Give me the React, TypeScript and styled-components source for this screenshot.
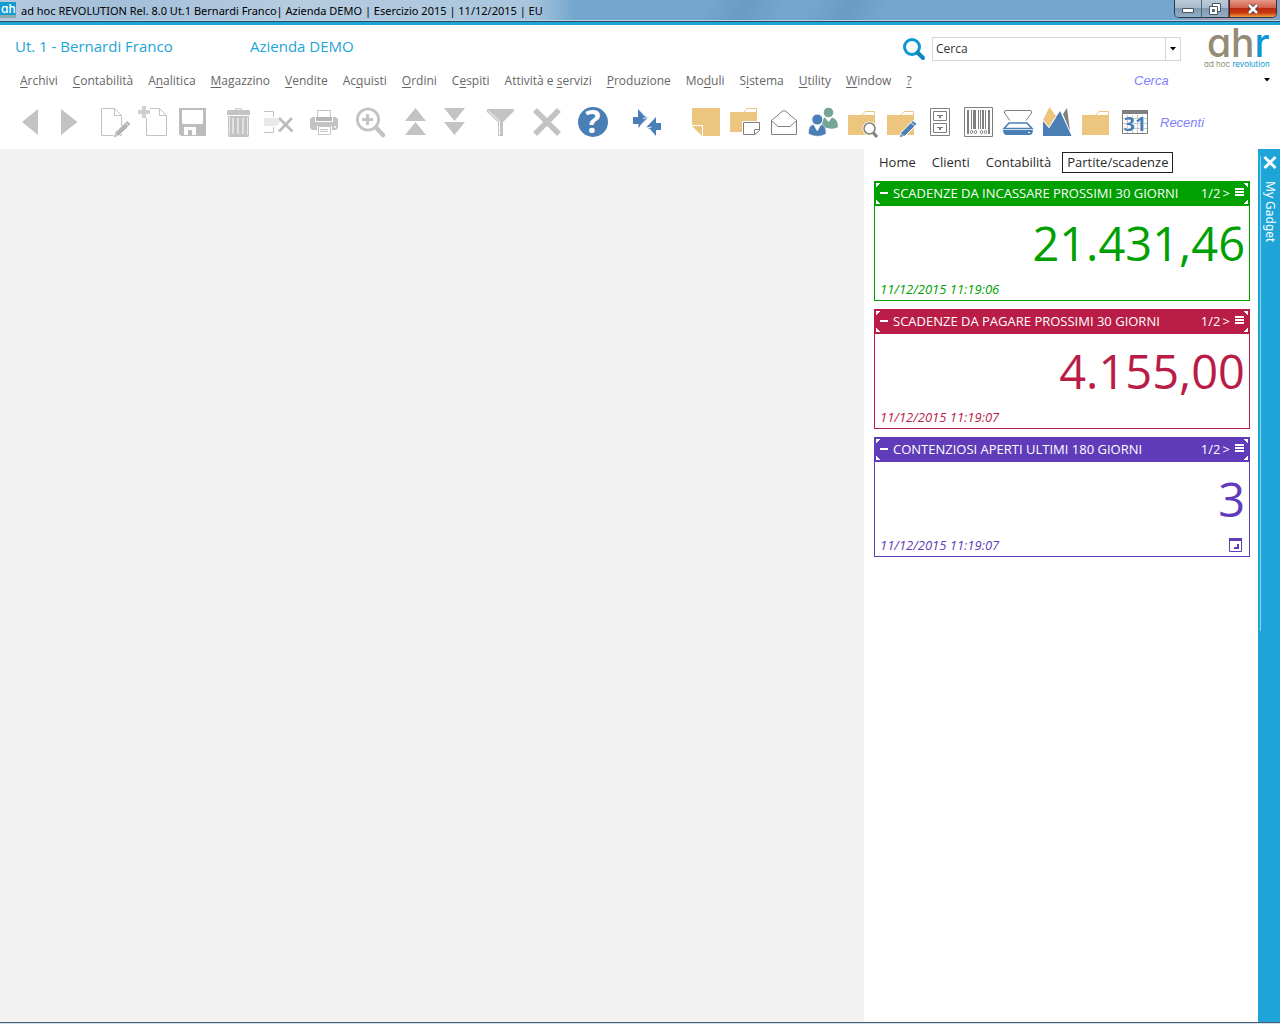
import React from 'react';
import styled, { createGlobalStyle } from 'styled-components';

const CYAN = '#1ea5d8';
const GREY = '#c3c3c3';
const DARK = '#7f7f7f';
const BLUE = '#4a7fb5';
const GOLD = '#ecc67e';

const GlobalStyle = createGlobalStyle`
  *, *::before, *::after { box-sizing: border-box; }
  body { margin: 0; background: #fff; font-family: 'Open Sans', 'Noto Sans', sans-serif; }
  button, input, select { font: inherit; color: inherit; margin: 0; }
  button { border: 0; padding: 0; background: none; cursor: pointer; }
  svg { display: block; flex: none; overflow: visible; }
`;

const Page = styled.div`
  min-height: 100vh;
  display: flex;
  flex-direction: column;
`;

/* ---------- Window title bar ---------- */

const TitleBar = styled.header`
  display: flex;
  align-items: flex-start;
  height: 25px;
  padding-right: 3px;
  border-bottom: 3px solid ${CYAN};
  box-shadow: inset 0 -1px 0 #34495e, inset 0 -2px 0 #b9d3e8;
  background:
    radial-gradient(ellipse 60px 30px at 1232px 8px, rgba(240, 130, 120, 0.7), transparent),
    linear-gradient(90deg, #b3c9de 0, #a3bfd9 120px, #b6cce0 300px, #a9c5dd 530px, rgba(169, 197, 221, 0) 575px),
    linear-gradient(115deg, #74a7cd 55%, #689cc4 58%, #74a7cd 61%, #74a7cd 63%, #689cc4 66%, #74a7cd 69%);
`;

const AppBadge = styled.span`
  width: 16px;
  height: 16px;
  margin: 2px 5px 0 0;
  background: #149bd0;
`;

const WindowTitle = styled.h1`
  flex: 1;
  margin: 0;
  font-family: 'Noto Sans', 'Open Sans', sans-serif;
  font-size: 11px;
  line-height: 22px;
  font-weight: 400;
  color: #000;
  white-space: nowrap;
`;

const WindowButtons = styled.div`
  display: flex;
  height: 18px;
  border: 1px solid #26384c;
  border-top: 0;
  border-radius: 0 0 5px 5px;
  overflow: hidden;
`;

const WindowButton = styled.button<{ $close?: boolean }>`
  width: ${p => (p.$close ? 47 : 27)}px;
  display: flex;
  align-items: center;
  justify-content: center;
  border-left: ${p => (p.$close ? '1px solid #5b1a12' : '0')};
  border-right: ${p => (p.$close ? '0' : '1px solid #4c6378')};
  background: ${p =>
    p.$close
      ? 'linear-gradient(#e59a8a 0, #d4604a 45%, #bb2a10 50%, #c9380f 75%, #f0a040)'
      : 'linear-gradient(#bccbd8 0, #a9bccd 45%, #7f9ab2 50%, #93afc6)'};
`;

/* ---------- Application header ---------- */

const AppHeader = styled.div`
  background: #fff;
`;

const IdentityRow = styled.div`
  display: flex;
  align-items: center;
  height: 43px;
  padding: 0 10px 0 15px;
  color: ${CYAN};
  font-size: 15px;
`;

const UserName = styled.span`
  width: 235px;
  padding-bottom: 2px;
`;

const Company = styled.span`
  flex: 1;
  padding-bottom: 2px;
`;

const SearchLabel = styled.label`
  margin: 4px 6px 0 0;
`;

const SearchBox = styled.div`
  display: flex;
  width: 249px;
  height: 24px;
  margin: 4px 23px 0 0;
  border: 1px solid #d6d6d6;
`;

const SearchInput = styled.input`
  flex: 1;
  min-width: 0;
  border: 0;
  outline: 0;
  padding: 0 3px;
  color: #333;
  font-size: 12px;
`;

const DropButton = styled.button`
  width: 15px;
  border-left: 1px solid #d6d6d6;
  display: flex;
  align-items: center;
  justify-content: center;
`;

const MenuRow = styled.div`
  display: flex;
  align-items: center;
  height: 24px;
  padding: 0 10px 0 20px;
`;

const Menu = styled.nav`
  flex: 1;
  display: flex;
  gap: 15px;
  padding-top: 2px;
`;

const MenuItem = styled.button`
  font-size: 12px;
  line-height: 20px;
  color: #666;
  white-space: nowrap;

  u { text-underline-offset: 2px; }
`;

const QuickFind = styled.div`
  display: flex;
  align-items: center;
  width: 136px;
`;

const QuickSelect = styled.select`
  flex: 1;
  appearance: none;
  border: 0;
  padding: 0;
  background: none;
  font: italic 13px 'Liberation Sans', Arial, sans-serif;
  color: #8080ff;
`;

const ToolRow = styled.div`
  display: flex;
  align-items: center;
  height: 57px;
  padding: 3px 0 0 14px;
`;

const ToolGroup = styled.div<{ $after?: number }>`
  display: flex;
  gap: 7px;
  margin-right: ${p => p.$after ?? 14}px;
`;

const ToolButton = styled.button`
  width: 32px;
  height: 32px;
`;

const RecentButton = styled.button`
  font: italic 13px 'Liberation Sans', Arial, sans-serif;
  color: #8080ff;
`;

/* ---------- Work area ---------- */

const Body = styled.div`
  flex: 1;
  display: flex;
`;

const Workspace = styled.main`
  flex: 1;
  background: #f2f2f2;
`;

const GadgetPanel = styled.aside`
  width: 394px;
  padding: 3px 8px 0 10px;
`;

const Tabs = styled.nav`
  display: flex;
  gap: 6px;
  height: 21px;
  margin-bottom: 8px;
`;

const Tab = styled.button<{ $active?: boolean }>`
  padding: 0 4px;
  border: 1px solid ${p => (p.$active ? '#222' : 'transparent')};
  font-size: 13px;
  line-height: 19px;
  color: #2b2b2b;
`;

const Card = styled.section<{ $color: string }>`
  display: flex;
  flex-direction: column;
  height: 120px;
  margin-bottom: 8px;
  border: 1px solid ${p => p.$color};
  color: ${p => p.$color};
`;

const corner = (angle: number, place: string) =>
  `linear-gradient(${angle}deg, #fff 3px, transparent 3px) ${place} / 4px 4px no-repeat`;

const CardHeader = styled.div<{ $color: string }>`
  display: flex;
  align-items: center;
  height: 23px;
  padding: 0 4px 2px;
  color: #fff;
  font-size: 13px;
  background:
    ${corner(135, 'left 1px top 1px')},
    ${corner(225, 'right 1px top 1px')},
    ${corner(45, 'left 1px bottom 1px')},
    ${corner(315, 'right 1px bottom 1px')},
    ${p => p.$color};
`;

const CardTitle = styled.h2`
  flex: 1;
  margin: 0 0 0 4px;
  font-size: 13px;
  line-height: 20px;
  font-weight: 400;
  white-space: nowrap;
`;

const Pager = styled.button`
  margin-right: 5px;
  line-height: 20px;
`;

const Amount = styled.p<{ $color: string }>`
  flex: 1;
  margin: 0;
  padding: 2px 4px 0 0;
  border-top: 1px solid ${p => p.$color};
  font-size: 47px;
  line-height: 70px;
  text-align: right;
`;

const CardFooter = styled.div`
  display: flex;
  align-items: center;
  justify-content: space-between;
  height: 22px;
  padding: 0 6px 0 5px;
  font-size: 13px;
  font-style: italic;
`;

const Rail = styled.aside`
  width: 22px;
  display: flex;
  flex-direction: column;
  align-items: center;
  padding: 7px 0 0 2px;
  color: #fff;
  background:
    linear-gradient(#8fd2ec, #8fd2ec) 2px 7px / 1px 475px no-repeat,
    ${CYAN};
`;

const RailTitle = styled.h2`
  margin: 12px 0 0;
  writing-mode: vertical-rl;
  font-family: 'Noto Sans', 'Open Sans', sans-serif;
  font-size: 12px;
  line-height: 16px;
  font-weight: 400;
`;

const TaskbarEdge = styled.footer`
  height: 2px;
  border-top: 1px solid #4a5b6b;
  background: #cfe0ef;
`;

/* ---------- Icons ---------- */

const Svg = ({ children }: { children: React.ReactNode }) => (
  <svg width="32" height="32" viewBox="0 0 32 32" fill="none" aria-hidden="true">
    {children}
  </svg>
);

const Folder = ({ y = 0, x = 0 }) => (
  <g transform={`translate(${x} ${y})`}>
    <path d="M2 9h12l4 -0.5H29V29H2z" fill={GOLD} />
    <path d="M15.500 9.500L19 5.500H28.500V9.500z" fill="#fff" stroke={GOLD} />
  </g>
);

const Pencil = ({ color, light }: { color: string; light?: boolean }) => (
  <g>
    <path d="M14 32L16 26.500L28 14.500L32 18L20 30z" fill={color} stroke="#fff" />
    <path d="M26 16.500L30 20.500" stroke="#fff" strokeWidth={light ? 0.8 : 1} />
    <path d="M16 27.500L18.500 30" stroke="#fff" strokeWidth="0.8" />
  </g>
);

const icons: Record<string, React.ReactNode> = {
  back: <path d="M8 16L24 3V29z" fill={GREY} />,
  forward: <path d="M24.500 16L8 3V29z" fill={GREY} />,
  edit: (
    <>
      <path d="M15.500 2.500H2.500V29.500H22.500V9.500zV9.500H22.500" stroke={GREY} />
      <Pencil color="#b4b4b4" light />
    </>
  ),
  create: (
    <>
      <path d="M12 2.500H21.500L28.500 9.500V29.500H8.500V12M21.500 2.500V9.500H28.500" stroke={GREY} />
      <path d="M4 0H8V4H12V8H8V12H4V8H0V4H4z" fill="#d0d0cd" />
    </>
  ),
  save: (
    <>
      <path d="M2 2H29V30H4L2 28z" fill="#bdbdbd" />
      <path d="M5 4H26V17L25 18H6L5 17z" fill="#fff" />
      <path d="M7 21H19V29H7z" fill="#fff" />
      <path d="M11 24H15V29H11z" fill="#bdbdbd" />
    </>
  ),
  trash: (
    <>
      <path d="M12.500 4.500V2.800H18.500V4.500" stroke={GREY} />
      <path d="M5 4H26L27 5V9H4V5z" fill={GREY} />
      <path d="M5 10H26V30L25 31H6L5 30z" fill={GREY} />
      <path d="M6.500 11V29M24.500 11V29" stroke="#fff" strokeWidth="0.6" />
      <path d="M10 12V28M15 12V28M20 12V28" stroke="#e2e2e2" strokeWidth="2" />
    </>
  ),
  removeRow: (
    <>
      <path d="M2 5.500H11.500V11M2 26.500H11.500V21" stroke={GREY} />
      <path d="M2 12H15L18 16L15 20H2z" fill="#e6eae7" />
      <path d="M17 12L30.500 25.500M30 12L17 25.500" stroke="#bdbdbd" strokeWidth="2.800" />
    </>
  ),
  print: (
    <>
      <path d="M9.500 11V4.500H22.500V11" stroke={GREY} />
      <path d="M8 11H24V15H8z" fill="#b5b5b5" />
      <path d="M4 11H7V16H25V11H28L30 13V22L28 24H4L2 22V13z" fill={GREY} />
      <path d="M9 20H24V24H9z" fill="#fff" />
      <path d="M10.500 20.500H22.500V28.500H10.500z" fill="#fff" stroke={GREY} />
      <path d="M12 23.500H20M12 25.500H20" stroke={GREY} />
      <circle cx="27" cy="21" r="1" fill="#fff" />
    </>
  ),
  zoom: (
    <>
      <circle cx="14" cy="13.500" r="10.600" stroke={GREY} strokeWidth="2.800" />
      <path d="M8 13.500H19M13.500 8V19" stroke={GREY} strokeWidth="3" />
      <path d="M22 21.500L29 29" stroke={GREY} strokeWidth="4.500" strokeLinecap="round" />
    </>
  ),
  first: <path d="M15.500 2L26 15H5zM15.500 16L26 29H5z" fill={GREY} />,
  last: <path d="M5 2H26L15.500 15zM5 16H26L15.500 29z" fill={GREY} />,
  filter: (
    <>
      <path d="M2 3H29V5L18 16V30H13V16L2 6z" fill={GREY} />
      <path d="M3.500 5L14.500 15V29" stroke="#fff" strokeWidth="1" />
    </>
  ),
  cancel: <path d="M4 4L28 28M28 4L4 28" stroke={GREY} strokeWidth="5.500" />,
  help: (
    <>
      <circle cx="16" cy="16" r="15" fill={BLUE} />
      <text x="16" y="27" textAnchor="middle" fontFamily="Open Sans, sans-serif" fontWeight="700" fontSize="32" fill="#fff">
        ?
      </text>
    </>
  ),
  swap: (
    <>
      <path d="M2 11H7V3L13.500 10L17.500 11.500L7.500 22V18H2z" fill={BLUE} />
      <path d="M30 17H25V11L15 21.500L19 23L25 30V24H30z" fill={BLUE} />
      <path d="M12 12.500L17.500 11L9 20M20 13.500L14.500 22L20.500 21" stroke="#fff" strokeWidth="0.900" />
    </>
  ),
  note: (
    <>
      <path d="M2 2H30V30H13V19H2z" fill={GOLD} />
      <path d="M2 20H12V30z" fill={GOLD} />
    </>
  ),
  folderNote: (
    <>
      <Folder x={-1} y={-3} />
      <path d="M13 15H31V30H13z" fill="#fff" />
      <path d="M14.500 16.500H30.500V24.500L26 28.500H14.500z" stroke={DARK} />
      <path d="M25.500 28.500V23.500H30.500" stroke={DARK} />
    </>
  ),
  mail: (
    <>
      <path d="M3.500 14.500V28.500H28.500V14.500L18 5.500Q16 3.500 14 5.500L3.500 14.500L10 20.500H22L28.500 14.500" stroke={DARK} />
    </>
  ),
  people: (
    <>
      <circle cx="21.500" cy="6.500" r="4.800" fill="#75a596" />
      <path d="M15 21Q15 12 18 11.500L21.500 16L25 11.500Q31 13 31 21Q27 24 20 22z" fill="#75a596" />
      <circle cx="10.300" cy="13.500" r="5.500" fill={BLUE} stroke="#fff" />
      <path d="M1.500 28Q1 19 6.500 18.500L10.300 25L14 18.500Q19.500 19.500 19 28Q11 32.500 1.500 28z" fill={BLUE} stroke="#fff" strokeWidth="0.500" />
    </>
  ),
  folderSearch: (
    <>
      <Folder />
      <circle cx="23.500" cy="22.500" r="7" fill="#fff" />
      <circle cx="23.500" cy="22.500" r="5.500" stroke={DARK} strokeWidth="1.500" />
      <path d="M27.500 27L31 31" stroke={DARK} strokeWidth="3" />
    </>
  ),
  folderEdit: (
    <>
      <Folder />
      <Pencil color={BLUE} />
    </>
  ),
  cabinet: (
    <>
      <path d="M6.500 2.500H25.500V29.500H6.500zM9.500 5.500H22.500V14.500H9.500zM9.500 17.500H22.500V26.500H9.500zM13 9.500H19M13 21.500H19" stroke={DARK} />
      <path d="M15 10H17V12H15zM15 22H17V24H15z" fill={DARK} />
    </>
  ),
  barcode: (
    <>
      <path d="M1.500 1.500H29.500V30.500H1.500z" stroke={DARK} />
      <path d="M5 4V28M20 4V23M26 4V28M12 4V23" stroke={DARK} strokeWidth="2" />
      <path d="M8.500 4V23M10.500 4V23M15.500 4V23M17.500 4V23M22.500 4V23" stroke={DARK} />
      <g stroke={DARK} strokeWidth="0.900">
        <ellipse cx="8.500" cy="26" rx="1.200" ry="1.600" />
        <ellipse cx="12.500" cy="26" rx="1.200" ry="1.600" />
        <ellipse cx="18.500" cy="26" rx="1.200" ry="1.600" />
        <ellipse cx="22.500" cy="26" rx="1.200" ry="1.600" />
      </g>
    </>
  ),
  scanner: (
    <>
      <path d="M8 14.500L2.500 7Q1.500 4.500 4 4.500H28Q30.500 4.500 29.500 7L24 14.500" stroke={DARK} />
      <path d="M2 22.500L7 17H25L30 22.500z" stroke={BLUE} strokeWidth="1.600" />
      <path d="M1 24H31Q31 29 27 29H5Q1 29 1 24z" fill={BLUE} />
      <path d="M26 26.500H28" stroke="#fff" />
    </>
  ),
  mountains: (
    <>
      <path d="M8.500 1L15 10L8 21L2 14z" fill={GOLD} />
      <path d="M26 2L22 8L29 25z" fill={DARK} />
      <path d="M2 15L8 22L19 5L30.500 30H2z" fill={BLUE} />
      <path d="M2 14.500L8 21.500L14.500 11.500" stroke="#fff" strokeWidth="0.800" />
    </>
  ),
  folder: <Folder />,
  calendar: (
    <>
      <path d="M3.500 4.500H28.500V27.500H3.500z" stroke={DARK} />
      <path d="M3 4H29V8H3z" fill={DARK} />
      <path d="M8.500 9V27M13.500 9V27M18.500 9V27M23.500 9V27M4 12.500H28M4 17.500H28M4 22.500H28" stroke="#c4c4c4" />
      <text x="16" y="25" textAnchor="middle" fontFamily="Open Sans, sans-serif" fontWeight="700" fontSize="20" fill={BLUE} stroke="#fff" strokeWidth="1" paintOrder="stroke">
        31
      </text>
    </>
  ),
};

const Caret = () => (
  <svg width="6" height="4" viewBox="0 0 6 4" aria-hidden="true">
    <path d="M0 0H6L3 3.500z" fill="#000" />
  </svg>
);

const Logo = () => (
  <svg width="66" height="42" viewBox="0 0 66 42" role="img" aria-label="ahr ad hoc revolution">
    <g fontFamily="Inter, sans-serif" style={{ fontFeatureSettings: "'cv11'" }}>
      <text x="3" y="31" fontSize="39" fontWeight="500" fill="#948b76">
        ah<tspan fill="#0d98d3">r</tspan>
      </text>
      <text x="0" y="41" fontSize="8" fill="#948b76">
        ad hoc <tspan fill="#0d98d3">revolution</tspan>
      </text>
    </g>
  </svg>
);

/* ---------- Data ---------- */

const menu: [string, string, string][] = [
  ['', 'A', 'rchivi'],
  ['', 'C', 'ontabilità'],
  ['A', 'n', 'alitica'],
  ['', 'M', 'agazzino'],
  ['', 'V', 'endite'],
  ['Ac', 'q', 'uisti'],
  ['', 'O', 'rdini'],
  ['C', 'e', 'spiti'],
  ['Attività e ', 's', 'ervizi'],
  ['', 'P', 'roduzione'],
  ['Mo', 'd', 'uli'],
  ['S', 'i', 'stema'],
  ['', 'U', 'tility'],
  ['', 'W', 'indow'],
  ['', '?', ''],
];

const toolGroups: { after?: number; tools: [string, string][] }[] = [
  { tools: [['back', 'Precedente'], ['forward', 'Successivo']] },
  { tools: [['edit', 'Modifica'], ['create', 'Nuovo'], ['save', 'Salva']] },
  { tools: [['trash', 'Elimina'], ['removeRow', 'Elimina riga']] },
  { tools: [['print', 'Stampa']] },
  { tools: [['zoom', 'Zoom']] },
  { tools: [['first', 'Pagina su'], ['last', 'Pagina giù']] },
  { tools: [['filter', 'Filtro']] },
  { tools: [['cancel', 'Annulla']] },
  { after: 22, tools: [['help', 'Aiuto']] },
  { after: 27, tools: [['swap', 'Cambia azienda']] },
  {
    after: 9,
    tools: [
      ['note', 'Nota'],
      ['folderNote', 'Cartella note'],
      ['mail', 'Posta'],
      ['people', 'Contatti'],
      ['folderSearch', 'Cerca documenti'],
      ['folderEdit', 'Modifica documenti'],
      ['cabinet', 'Archivio'],
      ['barcode', 'Codice a barre'],
      ['scanner', 'Scanner'],
      ['mountains', 'Immagini'],
      ['folder', 'Cartella'],
      ['calendar', 'Calendario'],
    ],
  },
];

const tabs = ['Home', 'Clienti', 'Contabilità', 'Partite/scadenze'];

const gadgets = [
  { title: 'SCADENZE DA INCASSARE PROSSIMI 30 GIORNI', value: '21.431,46', time: '11/12/2015 11:19:06', color: '#00a000' },
  { title: 'SCADENZE DA PAGARE PROSSIMI 30 GIORNI', value: '4.155,00', time: '11/12/2015 11:19:07', color: '#b91d47' },
  { title: 'CONTENZIOSI APERTI ULTIMI 180 GIORNI', value: '3', time: '11/12/2015 11:19:07', color: '#603cba', calendar: true },
];

/* ---------- Page ---------- */

export default function App() {
  return (
    <Page>
      <GlobalStyle />
      <TitleBar>
        <AppBadge>
          <svg width="16" height="16" viewBox="0 0 16 16" aria-hidden="true">
            <text x="1" y="11" fontFamily="Inter, sans-serif" fontSize="12" fontWeight="500" fill="#fff" style={{ fontFeatureSettings: "'cv11'" }}>
              ah
            </text>
            <path d="M0 14.500H16" stroke="#8fa9b0" strokeWidth="3" />
          </svg>
        </AppBadge>
        <WindowTitle>ad hoc REVOLUTION Rel. 8.0 Ut.1 Bernardi Franco| Azienda DEMO | Esercizio 2015 | 11/12/2015 | EU</WindowTitle>
        <WindowButtons>
          <WindowButton aria-label="Riduci a icona">
            <svg width="12" height="12" viewBox="0 0 12 12">
              <path d="M0.500 5.500H11.500V9.500H0.500z" fill="#fff" stroke="#4a5563" />
            </svg>
          </WindowButton>
          <WindowButton aria-label="Ripristina">
            <svg width="12" height="12" viewBox="0 0 12 12">
              <path d="M3.500 0.500H11.500V8.500H3.500z" fill="#fff" stroke="#4a5563" />
              <path d="M0.500 3.500H8.500V11.500H0.500z" fill="#fff" stroke="#4a5563" />
              <path d="M3.500 6.500H5.500V8.500H3.500z" fill="#8aa5bb" stroke="#4a5563" />
            </svg>
          </WindowButton>
          <WindowButton $close aria-label="Chiudi">
            <svg width="12" height="12" viewBox="0 0 12 12">
              <path d="M2 2L10 10M10 2L2 10" stroke="#5d3a3a" strokeWidth="4.500" />
              <path d="M2 2L10 10M10 2L2 10" stroke="#fff" strokeWidth="2.500" />
            </svg>
          </WindowButton>
        </WindowButtons>
      </TitleBar>

      <AppHeader>
        <IdentityRow>
          <UserName>Ut. 1 - Bernardi Franco</UserName>
          <Company>Azienda DEMO</Company>
          <SearchLabel htmlFor="search" aria-label="Cerca">
            <svg width="24" height="24" viewBox="0 0 24 24" fill="none">
              <circle cx="10" cy="10" r="7.500" stroke="#0d98d3" strokeWidth="3" />
              <path d="M15.500 15.500L21 21" stroke="#0d86bf" strokeWidth="4" strokeLinecap="round" />
            </svg>
          </SearchLabel>
          <SearchBox>
            <SearchInput id="search" defaultValue="Cerca" />
            <DropButton aria-label="Apri elenco ricerche">
              <Caret />
            </DropButton>
          </SearchBox>
          <Logo />
        </IdentityRow>
        <MenuRow>
          <Menu>
            {menu.map(([before, key, after]) => (
              <MenuItem key={before + key + after}>
                {before}
                <u>{key}</u>
                {after}
              </MenuItem>
            ))}
          </Menu>
          <QuickFind>
            <QuickSelect aria-label="Cerca voce di menu">
              <option>Cerca</option>
            </QuickSelect>
            <Caret />
          </QuickFind>
        </MenuRow>
        <ToolRow>
          {toolGroups.map((group, i) => (
            <ToolGroup key={i} $after={group.after}>
              {group.tools.map(([icon, label]) => (
                <ToolButton key={icon} aria-label={label}>
                  <Svg>{icons[icon]}</Svg>
                </ToolButton>
              ))}
            </ToolGroup>
          ))}
          <RecentButton>Recenti</RecentButton>
        </ToolRow>
      </AppHeader>

      <Body>
        <Workspace />
        <GadgetPanel>
          <Tabs>
            {tabs.map(tab => (
              <Tab key={tab} $active={tab === 'Partite/scadenze'}>
                {tab}
              </Tab>
            ))}
          </Tabs>
          {gadgets.map(g => (
            <Card key={g.title} $color={g.color}>
              <CardHeader $color={g.color}>
                <button aria-label="Comprimi">
                  <svg width="10" height="10" viewBox="0 0 10 10">
                    <path d="M1 4H9V6H1z" fill="#fff" />
                  </svg>
                </button>
                <CardTitle>{g.title}</CardTitle>
                <Pager>1/2&thinsp;&gt;</Pager>
                <button aria-label="Opzioni">
                  <svg width="10" height="9" viewBox="0 0 10 9">
                    <path d="M0 0H9V2H0zM0 3H9V5H0zM0 6H9V8H0z" fill="#fff" />
                  </svg>
                </button>
              </CardHeader>
              <Amount $color={g.color}>{g.value}</Amount>
              <CardFooter>
                <time>{g.time}</time>
                {g.calendar && (
                  <button aria-label="Calendario">
                    <svg width="14" height="14" viewBox="0 0 14 14" fill="none">
                      <path d="M0.500 0.500H12.500V13.500H0.500z" stroke={g.color} />
                      <path d="M0 0H13V3H0z" fill={g.color} />
                      <path d="M9 6V10H5" stroke={g.color} strokeWidth="2" />
                    </svg>
                  </button>
                )}
              </CardFooter>
            </Card>
          ))}
        </GadgetPanel>
        <Rail>
          <button aria-label="Chiudi My Gadget">
            <svg width="14" height="13" viewBox="0 0 14 13">
              <path d="M1.500 1L12.500 12M12.500 1L1.500 12" stroke="#fff" strokeWidth="3" />
            </svg>
          </button>
          <RailTitle>My Gadget</RailTitle>
        </Rail>
      </Body>
      <TaskbarEdge />
    </Page>
  );
}
